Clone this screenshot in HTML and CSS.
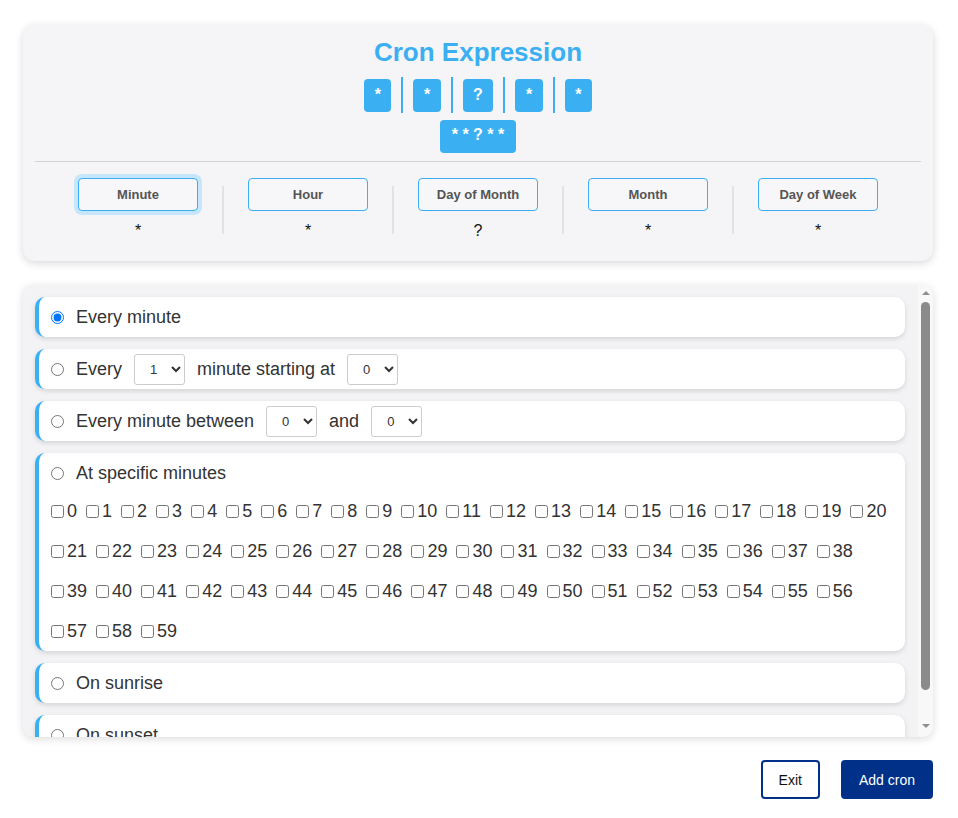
FILE: index.html
```html
<!DOCTYPE html>
<html lang="en">

<head>
    <meta charset="UTF-8">
    <meta name="viewport" content="width=device-width, initial-scale=1.0">
    <title>Cron Expression</title>
    <link rel="stylesheet" href="styles.css">
</head>

<body>
    <div class="app">
        <div class="expression-card">
            <h1 class="title">Cron Expression</h1>
            <div class="parts">
                <span class="part">*</span>
                <span class="part-sep"></span>
                <span class="part">*</span>
                <span class="part-sep"></span>
                <span class="part">?</span>
                <span class="part-sep"></span>
                <span class="part">*</span>
                <span class="part-sep"></span>
                <span class="part">*</span>
            </div>
            <div class="full-wrap">
                <span class="full">* * ? * *</span>
            </div>
            <hr class="rule">
            <div class="fields">
                <div class="field">
                    <button class="field-btn active">Minute</button>
                    <div class="field-value">*</div>
                </div>
                <div class="field-divider"></div>
                <div class="field">
                    <button class="field-btn">Hour</button>
                    <div class="field-value">*</div>
                </div>
                <div class="field-divider"></div>
                <div class="field">
                    <button class="field-btn">Day of Month</button>
                    <div class="field-value">?</div>
                </div>
                <div class="field-divider"></div>
                <div class="field">
                    <button class="field-btn">Month</button>
                    <div class="field-value">*</div>
                </div>
                <div class="field-divider"></div>
                <div class="field">
                    <button class="field-btn">Day of Week</button>
                    <div class="field-value">*</div>
                </div>
            </div>
        </div>

        <div class="options-box">
            <div class="options">
                <div class="option">
                    <label class="option-head">
                        <input type="radio" name="mode" checked>
                        <span>Every minute</span>
                    </label>
                </div>
                <div class="option">
                    <div class="option-head">
                        <input type="radio" name="mode">
                        <span>Every</span>
                        <select class="num">
                            <option>1</option>
                            <option>2</option>
                            <option>5</option>
                        </select>
                        <span>minute starting at</span>
                        <select class="num">
                            <option>0</option>
                            <option>1</option>
                        </select>
                    </div>
                </div>
                <div class="option">
                    <div class="option-head">
                        <input type="radio" name="mode">
                        <span>Every minute between</span>
                        <select class="num">
                            <option>0</option>
                            <option>1</option>
                        </select>
                        <span>and</span>
                        <select class="num">
                            <option>0</option>
                            <option>1</option>
                        </select>
                    </div>
                </div>
                <div class="option">
                    <label class="option-head">
                        <input type="radio" name="mode">
                        <span>At specific minutes</span>
                    </label>
                    <div class="minutes" id="minutes"></div>
                </div>
                <div class="option">
                    <label class="option-head">
                        <input type="radio" name="mode">
                        <span>On sunrise</span>
                    </label>
                </div>
                <div class="option">
                    <label class="option-head">
                        <input type="radio" name="mode">
                        <span>On sunset</span>
                    </label>
                </div>
            </div>
            <div class="scrollbar">
                <span class="sb-up"></span>
                <span class="sb-thumb"></span>
                <span class="sb-down"></span>
            </div>
        </div>

        <div class="actions">
            <button class="btn btn-outline">Exit</button>
            <button class="btn btn-primary">Add cron</button>
        </div>
    </div>

    <script>
        const box = document.getElementById('minutes');
        let html = '';
        for (let i = 0; i < 60; i++) {
            html += '<label class="minute"><input type="checkbox">' + i + '</label> ';
        }
        box.innerHTML = html;
    </script>
</body>

</html>
```

FILE: styles.css
```css
body {
    margin: 0;
    padding: 0;
    font-family: "Liberation Sans", Arial, sans-serif;
    background-color: #fff;
    color: #333;
}

.app {
    padding: 25px 25px 20px 23px;
}

.expression-card {
    background-color: #f5f5f7;
    border-radius: 12px;
    box-shadow: 0 2px 8px rgba(0, 0, 0, 0.16);
    padding: 12px 12px 20px;
}

.title {
    margin: 0;
    text-align: center;
    font-size: 26px;
    line-height: 30px;
    font-weight: bold;
    color: #3aaff2;
}

.parts {
    display: flex;
    justify-content: center;
    align-items: center;
    margin-top: 10px;
}

.part {
    height: 33px;
    line-height: 31px;
    padding: 0 10.5px;
    background-color: #3aaff2;
    color: #fff;
    font-size: 16px;
    font-weight: bold;
    border-radius: 4px;
}

.part-sep {
    width: 2px;
    height: 36px;
    margin: 0 10px;
    background-color: #3aaff2;
}

.full-wrap {
    display: flex;
    justify-content: center;
    margin-top: 7px;
}

.full {
    height: 33px;
    line-height: 29px;
    padding: 0 12px;
    background-color: #3aaff2;
    color: #fff;
    font-size: 16px;
    font-weight: bold;
    border-radius: 4px;
    white-space: pre;
}

.rule {
    margin: 8px 0 0;
    border: none;
    border-top: 1px solid #d3d3d6;
}

.fields {
    display: flex;
    justify-content: center;
    margin-top: 16px;
}

.field {
    width: 168px;
    text-align: center;
}

.field-divider {
    width: 2px;
    height: 48px;
    margin-top: 8px;
    background-color: #e2e2e5;
}

.field-btn {
    width: 120px;
    height: 33px;
    border: 1px solid #3aaff2;
    border-radius: 4px;
    background-color: #f7f7f9;
    color: #555;
    font-family: "Liberation Sans", Arial, sans-serif;
    font-size: 13px;
    font-weight: bold;
    cursor: pointer;
}

.field-btn.active {
    box-shadow: 0 0 0 4px #c5e6fb;
}

.field-value {
    margin-top: 10px;
    line-height: 20px;
    font-size: 16px;
    color: #111;
}

.options-box {
    display: flex;
    margin-top: 24px;
    height: 452px;
    background-color: #f3f3f5;
    border-radius: 10px;
    box-shadow: 0 2px 8px rgba(0, 0, 0, 0.14);
    overflow: hidden;
}

.options {
    flex: 1;
    overflow-y: auto;
    scrollbar-width: none;
    padding: 12px 13px 12px 12px;
    display: flex;
    flex-direction: column;
    gap: 12px;
}

.scrollbar {
    width: 15px;
    display: flex;
    flex-direction: column;
    align-items: center;
    background-color: #f8f8f9;
}

.sb-up {
    margin-top: 6px;
    border-left: 4px solid transparent;
    border-right: 4px solid transparent;
    border-bottom: 4px solid #8e8e8e;
}

.sb-thumb {
    margin-top: 7px;
    width: 9px;
    height: 388px;
    border-radius: 5px;
    background-color: #8b8b8b;
}

.sb-down {
    margin-top: auto;
    margin-bottom: 9px;
    border-left: 4px solid transparent;
    border-right: 4px solid transparent;
    border-top: 4px solid #8e8e8e;
}

.option {
    flex-shrink: 0;
    background-color: #fff;
    border-left: 4px solid #3aaff2;
    border-radius: 10px;
    box-shadow: 0 2px 5px rgba(0, 0, 0, 0.13);
    padding: 0 12px 0 8px;
    font-size: 18px;
    color: #333;
}

.option-head {
    display: flex;
    align-items: center;
    gap: 12px;
    height: 40px;
}

.option-head input[type="radio"] {
    margin: 0 0 0 4px;
    width: 13px;
    height: 13px;
}

.num {
    width: 51px;
    height: 31px;
    padding: 0 4px 0 11px;
    border: 1px solid #ccc;
    border-radius: 3px;
    background-color: #fff;
    color: #333;
    font-family: "Liberation Sans", Arial, sans-serif;
    font-size: 13px;
}

.minutes {
    line-height: 40px;
    margin-top: -2px;
}

.minute {
    white-space: nowrap;
}

.minute input {
    width: 13px;
    height: 13px;
    margin: 3px 3px 3px 4px;
    vertical-align: -1px;
}

.actions {
    display: flex;
    justify-content: flex-end;
    gap: 21px;
    margin-top: 23px;
}

.btn {
    height: 39px;
    padding: 0 16px;
    border: 2px solid #003087;
    border-radius: 4px;
    font-family: "Liberation Sans", Arial, sans-serif;
    font-size: 14px;
    cursor: pointer;
}

.btn-outline {
    background-color: #fff;
    color: #111;
}

.btn-primary {
    background-color: #003087;
    color: #fff;
}
```
